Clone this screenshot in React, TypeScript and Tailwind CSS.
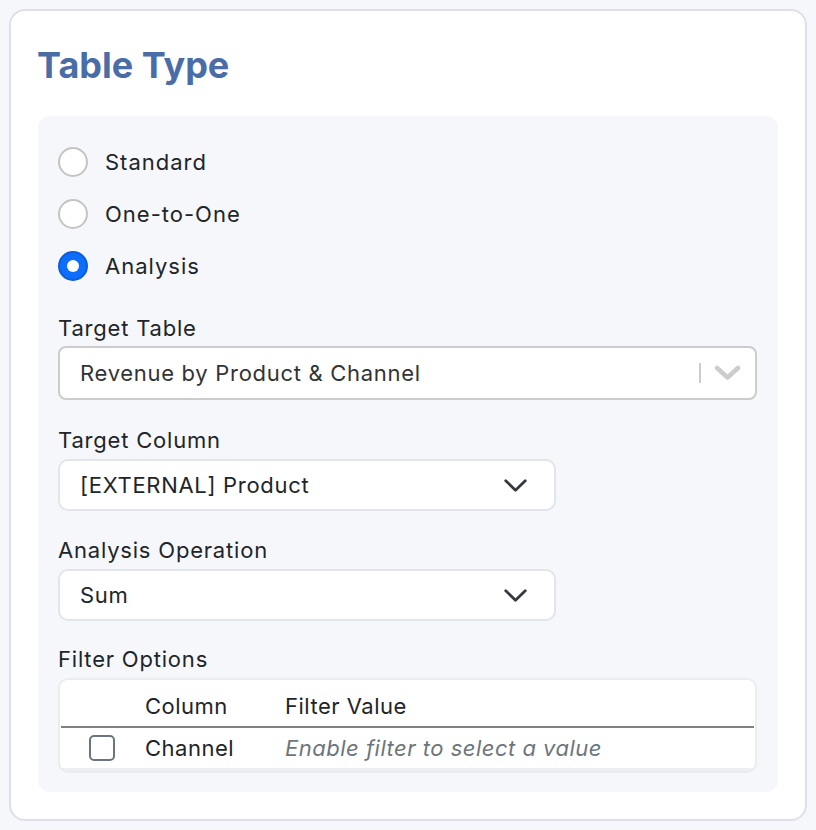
import React from "react";

const font = { fontFamily: "Inter, 'Noto Sans', sans-serif" };

function Radio({ label, checked }: { label: string; checked?: boolean }) {
  return (
    <div className="flex items-center h-[36px]">
      {checked ? (
        <span className="w-[30px] h-[30px] rounded-full bg-[#0d6efd] border-2 border-[#0b5ed7] flex items-center justify-center shrink-0">
          <span className="w-[12px] h-[12px] rounded-full bg-white" />
        </span>
      ) : (
        <span className="w-[30px] h-[30px] rounded-full bg-white border-2 border-[#c4c4c4] shrink-0" />
      )}
      <span className="ml-[17px] text-[22px] tracking-[1px] text-[#212529] leading-none">{label}</span>
    </div>
  );
}

function Chevron() {
  return (
    <svg width="23" height="13" viewBox="0 0 23 13" fill="none">
      <path d="M1.75 1.75 L11.5 11.25 L21.25 1.75" stroke="#343a40" strokeWidth="2.8" strokeLinecap="round" strokeLinejoin="round" />
    </svg>
  );
}

function BsSelect({ value }: { value: string }) {
  return (
    <div className="w-[498px] h-[52px] bg-white border-2 border-[#e2e5ea] rounded-[10px] flex items-center justify-between pl-[20px] pr-[27px]">
      <span className="text-[22px] tracking-[0.7px] text-[#212529] leading-none">{value}</span>
      <Chevron />
    </div>
  );
}

export default function App() {
  return (
    <div className="min-h-[830px] bg-[#f6f7fb] p-[9px]" style={font}>
      <div className="w-[798px] h-[812px] bg-white border-2 border-[#dfdfec] rounded-[16px] px-[27px] pt-[33px]">
        <h1 className="text-[36px] font-bold text-[#4a6da7] leading-[42px] -ml-[1px]">Table Type</h1>
        <div className="mt-[30px] bg-[#f6f7fb] rounded-[12px] pl-[20px] pr-[21px] pt-[28px] pb-[19px]">
          <div className="flex flex-col gap-[16px]">
            <Radio label="Standard" />
            <Radio label="One-to-One" />
            <Radio label="Analysis" checked />
          </div>

          <div className="mt-[30px] text-[22px] tracking-[0.8px] text-[#212529] leading-[28px]">Target Table</div>
          <div className="mt-[4px] h-[54px] bg-white border-2 border-[#cccccc] rounded-[8px] flex items-center pl-[20px] pr-[14px]">
            <span className="flex-1 text-[22px] tracking-[0.7px] text-[#333333] leading-none">Revenue by Product &amp; Channel</span>
            <span className="w-[2px] h-[20px] bg-[#cccccc]" />
            <span className="ml-[13px]">
              <svg width="27" height="16" viewBox="0 0 27 16" fill="none">
                <path d="M3 3 L13.5 12.5 L24 3" stroke="#cccccc" strokeWidth="4.5" strokeLinecap="round" strokeLinejoin="round" />
              </svg>
            </span>
          </div>

          <div className="mt-[26px] text-[22px] tracking-[0.8px] text-[#212529] leading-[28px]">Target Column</div>
          <div className="mt-[5px]">
            <BsSelect value="[EXTERNAL] Product" />
          </div>

          <div className="mt-[25px] text-[22px] tracking-[0.8px] text-[#212529] leading-[28px]">Analysis Operation</div>
          <div className="mt-[5px]">
            <BsSelect value="Sum" />
          </div>

          <div className="mt-[24px] text-[22px] tracking-[0.8px] text-[#212529] leading-[28px]">Filter Options</div>
          <div className="mt-[5px] bg-[#eceef1] border-2 border-[#eaecf0] rounded-[10px] overflow-hidden pb-[3px]">
            <div className="bg-white">
              <div className="flex items-center h-[48px] pt-[6px] border-b-2 border-[#808080] mx-[1px]">
                <div className="w-[84px]" />
                <div className="w-[140px] text-[22px] tracking-[0.5px] text-[#212529] leading-none">Column</div>
                <div className="text-[22px] tracking-[0.5px] text-[#212529] leading-none">Filter Value</div>
              </div>
              <div className="flex items-center h-[40px] mx-[1px]">
                <div className="w-[84px] flex justify-start pl-[28px]">
                  <span className="w-[26px] h-[26px] border-2 border-[#6c757d] rounded-[5px] bg-white" />
                </div>
                <div className="w-[140px] text-[22px] tracking-[0.5px] text-[#212529] leading-none">Channel</div>
                <div className="text-[22px] tracking-[0.5px] text-[#6c757d] italic leading-none">Enable filter to select a value</div>
              </div>
            </div>
          </div>
        </div>
      </div>
    </div>
  );
}
